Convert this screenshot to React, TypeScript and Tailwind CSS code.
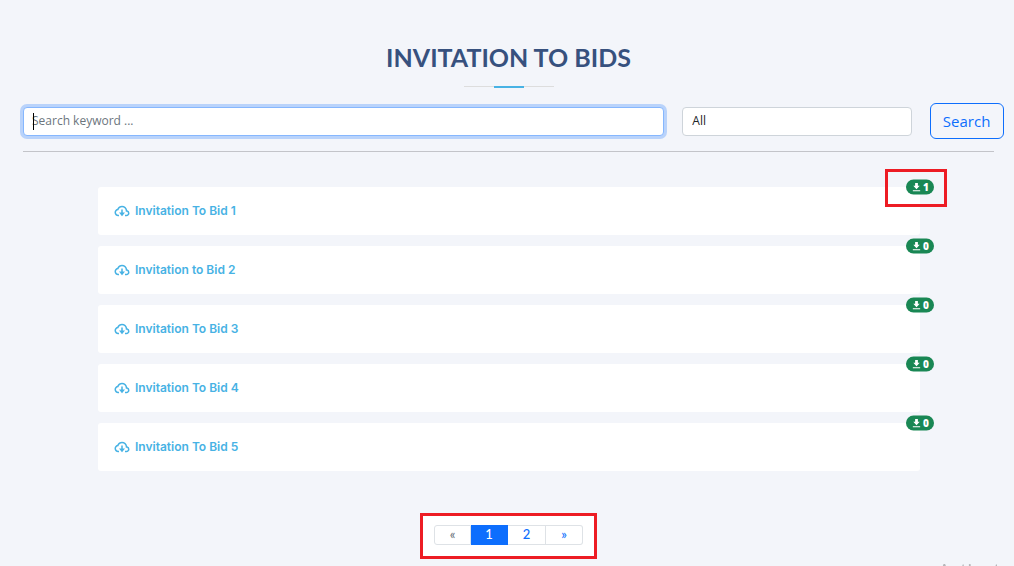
import { useState } from "react";
import { BiCloudDownload, BiSolidDownload } from "react-icons/bi";

const bids = [
  { id: 1, title: "Invitation To Bid 1", downloads: 1 },
  { id: 2, title: "Invitation to Bid 2", downloads: 0 },
  { id: 3, title: "Invitation To Bid 3", downloads: 0 },
  { id: 4, title: "Invitation To Bid 4", downloads: 0 },
  { id: 5, title: "Invitation To Bid 5", downloads: 0 },
];

const BidRow = ({
  title,
  downloads,
  highlighted,
}: {
  title: string;
  downloads: number;
  highlighted?: boolean;
}) => {
  return (
    <li className="relative flex h-12 items-center rounded-[3px] bg-white px-[15px]">
      <a
        href="#"
        className="flex items-center gap-1 font-['Inter',sans-serif] text-[12px] font-semibold text-[#47b2e4]"
      >
        <BiCloudDownload className="size-[18px]" />
        {title}
      </a>
      <span className="absolute top-0 right-0 flex h-[15px] w-7 translate-x-1/2 -translate-y-1/2 items-center justify-center gap-px rounded-full bg-[#198754] pb-px font-['Open_Sans',sans-serif] text-[10px] leading-none font-extrabold text-white">
        <BiSolidDownload className="size-[11px]" />
        {downloads}
      </span>
      {/* red marker around the download counter */}
      {highlighted && (
        <span className="pointer-events-none absolute -top-[18px] -right-[27px] h-[38px] w-[62px] border-3 border-[#ed1c24]" />
      )}
    </li>
  );
};

const Pagination = ({
  page,
  setPage,
}: {
  page: number;
  setPage: (page: number) => void;
}) => {
  const base =
    "h-5 border-y border-r pb-px font-['Lato',sans-serif] text-[13px] leading-none font-medium";

  return (
    <nav
      aria-label="Pages"
      className="mx-auto flex w-fit border-3 border-[#ed1c24] bg-white px-[11px] pt-[9px] pb-[11px]"
    >
      <button
        className={`${base} w-[37px] rounded-l-[3px] border-l border-[#dee2e6] text-[#6c757d]`}
        onClick={() => setPage(1)}
      >
        «
      </button>
      {[1, 2].map((n) => (
        <button
          key={n}
          className={`${base} ${
            n === page
              ? "w-[37px] border-[#0d6efd] bg-[#0d6efd] text-white"
              : "w-[38px] border-[#dee2e6] text-[#0d6efd]"
          }`}
          onClick={() => setPage(n)}
        >
          {n}
        </button>
      ))}
      <button
        className={`${base} w-[37px] rounded-r-[3px] border-[#dee2e6] text-[#0d6efd]`}
        onClick={() => setPage(2)}
      >
        »
      </button>
    </nav>
  );
};

const App = () => {
  const [keyword, setKeyword] = useState("");
  const [page, setPage] = useState(1);

  return (
    <div className="min-h-screen overflow-hidden bg-[#f3f5fa] pt-[41px] pr-5 pl-[23px] font-['Open_Sans',sans-serif] text-[#444444]">
      <h2 className="text-center font-['Lato',sans-serif] text-[25px] leading-8 font-bold text-[#37517e]">
        INVITATION TO BIDS
      </h2>
      <div className="mx-auto mt-[13px] flex w-[90px] items-start justify-center">
        <span className="h-px flex-1 bg-[#dddddd]" />
        <span className="h-[2px] w-[30px] bg-[#47b2e4]" />
        <span className="h-px flex-1 bg-[#dddddd]" />
      </div>

      <form
        className="mt-[15px] grid grid-cols-12 items-center gap-x-[18px]"
        onSubmit={(e) => e.preventDefault()}
      >
        <div className="relative col-span-8">
          <input
            type="text"
            aria-label="Search keyword"
            placeholder="Search keyword ..."
            value={keyword}
            onChange={(e) => setKeyword(e.target.value)}
            className="block h-[29px] w-full rounded-[4px] border border-[#86b7fe] bg-white px-2 pb-px text-[12px] ring-3 ring-[#b9d3fb] outline-none placeholder:text-[#6c757d]"
          />
          {/* text caret */}
          <span className="absolute top-[6px] left-[10px] h-[17px] w-px bg-black" />
        </div>
        <select
          aria-label="Category"
          className="col-span-3 h-[29px] w-full appearance-none rounded-[4px] border border-[#ced4da] bg-white px-[9px] text-[12px] text-[#212529]"
        >
          <option>All</option>
        </select>
        <button
          type="submit"
          className="h-9 w-[74px] rounded-[6px] border border-[#0d6efd] text-[15px] text-[#0d6efd]"
        >
          Search
        </button>
      </form>

      <hr className="mt-3 border-[#c3c4c9]" />

      <ul className="mt-[35px] mr-[74px] ml-[75px] flex flex-col gap-[11px]">
        {bids.map((bid) => (
          <BidRow
            key={bid.id}
            title={bid.title}
            downloads={bid.downloads}
            highlighted={bid.id === 1}
          />
        ))}
      </ul>

      <div className="mt-[42px]">
        <Pagination page={page} setPage={setPage} />
      </div>

      {/* system watermark, mostly below the fold */}
      <div className="fixed right-0 bottom-0 h-[3px] w-[76px] overflow-hidden text-[20px] leading-5 whitespace-nowrap text-[#b4b5b8]">
        <span className="-mt-[2px] block">Activate</span>
      </div>
    </div>
  );
};

export default App;
